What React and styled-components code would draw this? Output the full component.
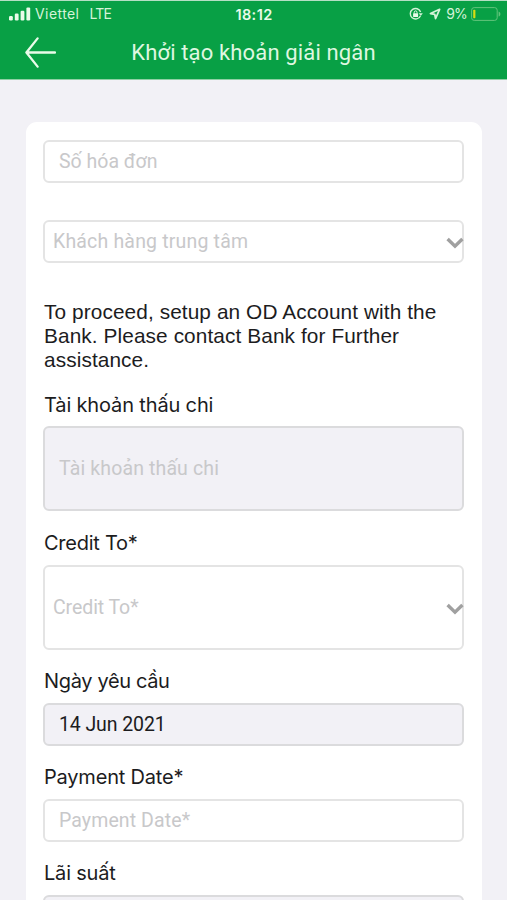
import React from "react";
import styled, { createGlobalStyle } from "styled-components";

function App() {
  return (
    <Screen>
      <GlobalStyle />
      <Header>
        <StatusBar>
          <Carrier>
            <SignalIcon />
            <StatusText $spacing="0.42px">Viettel</StatusText>
            <StatusText $spacing="-0.8px">LTE</StatusText>
          </Carrier>
          <Clock>18:12</Clock>
          <StatusRight>
            <RotationLockIcon />
            <LocationIcon />
            <StatusText $spacing="-0.8px">9%</StatusText>
            <BatteryIcon />
          </StatusRight>
        </StatusBar>
        <NavBar>
          <BackButton aria-label="Back">
            <BackIcon />
          </BackButton>
          <Title>Khởi tạo khoản giải ngân</Title>
        </NavBar>
      </Header>
      <Card>
        <Field>
          <Placeholder $spacing="0">Số hóa đơn</Placeholder>
        </Field>
        <Select $top={37}>
          <Placeholder $spacing="0.18px">Khách hàng trung tâm</Placeholder>
          <ChevronIcon />
        </Select>
        <Notice>
          To proceed, setup an OD Account with the Bank. Please contact Bank for
          Further assistance.
        </Notice>
        <Label $spacing="-0.15px">Tài khoản thấu chi</Label>
        <Field $tall $disabled>
          <Placeholder $spacing="0.13px">Tài khoản thấu chi</Placeholder>
        </Field>
        <Label $spacing="-0.25px">Credit To*</Label>
        <Select $tall>
          <Placeholder $spacing="-0.08px">Credit To*</Placeholder>
          <ChevronIcon />
        </Select>
        <Label $spacing="-0.35px">Ngày yêu cầu</Label>
        <Field $disabled>
          <Value>14 Jun 2021</Value>
        </Field>
        <Label $spacing="-0.2px">Payment Date*</Label>
        <Field>
          <Placeholder $spacing="0.1px">Payment Date*</Placeholder>
        </Field>
        <Label $spacing="-0.2px">Lãi suất</Label>
        <Field $disabled />
      </Card>
    </Screen>
  );
}

const SignalIcon = () => (
  <svg width="22" height="14" viewBox="0 0 22 14" fill="#e9fbe9">
    <rect x="0" y="9" width="3.8" height="4.4" rx="1.2" />
    <rect x="5.8" y="6.6" width="3.8" height="6.8" rx="1.2" />
    <rect x="11.6" y="3.8" width="3.8" height="9.6" rx="1.2" />
    <rect x="17.4" y="0.4" width="3.8" height="13" rx="1.2" />
  </svg>
);

const RotationLockIcon = () => (
  <svg width="14" height="14" viewBox="0 0 14 14" fill="none">
    <path
      d="M11.4 9A5.3 5.3 0 1 1 11.6 5"
      stroke="#d5f3d8"
      strokeWidth="1.4"
    />
    <path d="M9.8 6.2h4l-2 2.8z" fill="#d5f3d8" />
    <rect x="4.1" y="6.2" width="5" height="3.8" rx="0.5" fill="#e9fbe9" />
    <path d="M5.2 6.5V5.3a1.4 1.4 0 0 1 2.8 0v1.2" stroke="#e9fbe9" />
  </svg>
);

const LocationIcon = () => (
  <svg width="12" height="12" viewBox="0 0 12 12" fill="none">
    <path
      d="M10.6 1.3 1.5 5.5l4.2.8.9 4.2z"
      stroke="#d5f3d8"
      strokeWidth="1.8"
      strokeLinejoin="round"
    />
  </svg>
);

const BatteryIcon = () => (
  <svg width="30" height="14" viewBox="0 0 30 14" fill="none">
    <rect x="0.6" y="0.6" width="25.6" height="12.8" rx="2.6" stroke="#63c47c" />
    <path d="M27.6 4.4c2.4 1 2.4 4.2 0 5.2z" fill="#63c47c" />
    <rect x="2.2" y="2.8" width="2.2" height="8.4" rx="0.8" fill="#d8dc12" />
  </svg>
);

const BackIcon = () => (
  <svg width="32" height="31" viewBox="0 0 32 31" fill="none">
    <path
      d="M13.6 1.4 2.4 15.5l11.2 14.1M2.4 15.5H31"
      stroke="#e9fbe9"
      strokeWidth="2.3"
      strokeLinecap="round"
      strokeLinejoin="round"
    />
  </svg>
);

const ChevronIcon = () => (
  <svg width="18" height="12" viewBox="0 0 18 12" fill="none">
    <path d="M1.6 2 9 9.2 16.4 2" stroke="#a0a0a0" strokeWidth="3.4" />
  </svg>
);

export default App;

const GlobalStyle = createGlobalStyle`
  * {
    box-sizing: border-box;
  }

  body {
    margin: 0;
    background: #f2f1f6;
    overflow: hidden;
  }
`;

const Screen = styled.div`
  width: 507px;
  height: 900px;
  overflow: hidden;
  background: #f2f1f6;
  font-family: Inter, "Liberation Sans", sans-serif;
`;

const Header = styled.header`
  height: 80px;
  background: #08a045;
  border-top: 1px solid #b5dfc4;
  border-bottom: 1px solid #8fd0a5;
`;

const StatusBar = styled.div`
  display: grid;
  grid-template-columns: 1fr auto 1fr;
  align-items: center;
  height: 26px;
  padding: 0 6px 0 9px;
`;

const Carrier = styled.div`
  display: flex;
  align-items: center;

  svg {
    margin-right: 4px;
  }

  span + span {
    margin-left: 10px;
  }
`;

const StatusText = styled.span`
  font-size: 14px;
  line-height: 18px;
  letter-spacing: ${(props) => props.$spacing};
  color: #d5f3d8;
`;

const Clock = styled.span`
  margin-right: 2px;
  font-size: 14.5px;
  font-weight: 600;
  letter-spacing: 0.4px;
  color: #e9fbe9;
`;

const StatusRight = styled.div`
  display: flex;
  align-items: center;
  justify-content: flex-end;

  svg:nth-child(2) {
    margin: 0 5px 0 6px;
  }

  svg:last-child {
    margin-left: 4px;
  }
`;

const NavBar = styled.div`
  display: flex;
  align-items: center;
  height: 50px;
  padding-left: 24px;
`;

const BackButton = styled.button`
  display: flex;
  padding: 0;
  border: 0;
  background: none;
`;

const Title = styled.h1`
  flex: 1;
  margin: 0 56px 0 0;
  text-align: center;
  white-space: nowrap;
  font-family: Roboto, sans-serif;
  font-size: 22px;
  font-weight: 400;
  letter-spacing: 0.15px;
  color: #dff7e0;
`;

const Card = styled.main`
  display: flex;
  flex-direction: column;
  height: 800px;
  margin: 42px 25px 0 26px;
  padding: 18px 18px 0 17px;
  border-radius: 11px;
  background: #fff;
`;

const Field = styled.div`
  display: flex;
  flex-shrink: 0;
  align-items: center;
  height: ${(props) => (props.$tall ? 85 : 43)}px;
  padding-left: 14px;
  border: 2px solid ${(props) => (props.$disabled ? "#dbdbdd" : "#e4e4e4")};
  border-radius: 6px;
  background: ${(props) => (props.$disabled ? "#f2f1f6" : "#fff")};
`;

const Select = styled(Field)`
  justify-content: space-between;
  margin-top: ${(props) => props.$top || 0}px;
  padding-left: 8px;

  svg {
    margin: 3px -2px 0 0;
  }
`;

const Placeholder = styled.span`
  font-family: Roboto, sans-serif;
  font-size: 19.5px;
  letter-spacing: ${(props) => props.$spacing};
  color: #c8c8ca;
`;

const Value = styled.span`
  font-family: Roboto, sans-serif;
  font-size: 19.5px;
  letter-spacing: -0.1px;
  color: #1c1c1e;
`;

const Notice = styled.p`
  margin: 37.4px 0 20.45px 1px;
  font-family: "Liberation Sans", Arial, sans-serif;
  font-size: 20.8px;
  line-height: 24px;
  letter-spacing: 0.1px;
  color: #1c1c1e;
`;

const Label = styled.label`
  flex-shrink: 0;
  height: 24px;
  margin-bottom: 9.6px;
  padding-left: 1px;
  font-size: 20px;
  line-height: 24px;
  letter-spacing: ${(props) => props.$spacing};
  color: #1c1c1e;

  ${Field} + & {
    margin-top: 19.5px;
  }
`;
